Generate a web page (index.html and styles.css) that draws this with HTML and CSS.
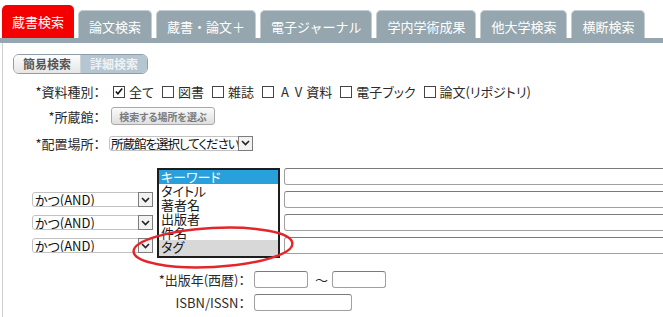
FILE: index.html
```html
<!DOCTYPE html>
<html lang="ja">

<head>
    <meta charset="UTF-8">
    <meta name="viewport" content="width=device-width, initial-scale=1.0">
    <title>蔵書検索</title>
    <link rel="stylesheet" href="styles.css">
</head>

<body>

    <!-- Tabs -->
    <div class="tabs">
        <div class="tab tab-active">蔵書検索</div>
        <div class="tab">論文検索</div>
        <div class="tab">蔵書・論文＋</div>
        <div class="tab">電子ジャーナル</div>
        <div class="tab">学内学術成果</div>
        <div class="tab">他大学検索</div>
        <div class="tab">横断検索</div>
    </div>
    <div class="tab-line"></div>

    <div class="panel">

        <!-- Simple / detail toggle -->
        <div class="mode">
            <span class="mode-btn">簡易検索</span>
            <span class="mode-btn mode-on">詳細検索</span>
        </div>

        <div class="row row-type">
            <div class="label">*資料種別：</div>
            <div class="checks">
                <span class="check"><span class="box"><svg width="11" height="11" viewBox="0 0 11 11"><path d="M2 5.5 L4.3 8 L9 2.2" fill="none" stroke="#111" stroke-width="1.7"/></svg></span>全て</span>
                <span class="check"><span class="box"></span>図書</span>
                <span class="check"><span class="box"></span>雑誌</span>
                <span class="check"><span class="box"></span><span class="av">A&nbsp;&nbsp;V</span>資料</span>
                <span class="check"><span class="box"></span>電子ブック</span>
                <span class="check"><span class="box"></span>論文(リポジトリ)</span>
            </div>
        </div>

        <div class="row row-lib">
            <div class="label">*所蔵館：</div>
            <button class="pick-btn">検索する場所を選ぶ</button>
        </div>

        <div class="row row-loc">
            <div class="label">*配置場所：</div>
            <div class="select select-loc">
                <span class="select-text">所蔵館を選択してください</span>
                <span class="select-arrow"><svg width="9" height="6" viewBox="0 0 9 6"><path d="M1 1 L4.5 4.5 L8 1" fill="none" stroke="#222" stroke-width="1.6"/></svg></span>
            </div>
        </div>

        <!-- Keyword rows -->
        <div class="search">
            <div class="srow">
                <div class="op-space"></div>
                <div class="select select-field"><span class="select-text">キーワード</span></div>
                <input type="text" class="text">
            </div>
            <div class="srow">
                <div class="select select-op">
                    <span class="select-text">かつ(AND)</span>
                    <span class="select-arrow"><svg width="9" height="6" viewBox="0 0 9 6"><path d="M1 1 L4.5 4.5 L8 1" fill="none" stroke="#222" stroke-width="1.6"/></svg></span>
                </div>
                <div class="select select-field"><span class="select-text">タイトル</span></div>
                <input type="text" class="text">
            </div>
            <div class="srow">
                <div class="select select-op">
                    <span class="select-text">かつ(AND)</span>
                    <span class="select-arrow"><svg width="9" height="6" viewBox="0 0 9 6"><path d="M1 1 L4.5 4.5 L8 1" fill="none" stroke="#222" stroke-width="1.6"/></svg></span>
                </div>
                <div class="select select-field"><span class="select-text">著者名</span></div>
                <input type="text" class="text">
            </div>
            <div class="srow">
                <div class="select select-op">
                    <span class="select-text">かつ(AND)</span>
                    <span class="select-arrow"><svg width="9" height="6" viewBox="0 0 9 6"><path d="M1 1 L4.5 4.5 L8 1" fill="none" stroke="#222" stroke-width="1.6"/></svg></span>
                </div>
                <div class="select select-field"><span class="select-text">出版者</span></div>
                <input type="text" class="text">
            </div>

            <!-- open dropdown of the first row -->
            <div class="listbox">
                <div class="opt opt-sel">キーワード</div>
                <div class="opt">タイトル</div>
                <div class="opt">著者名</div>
                <div class="opt">出版者</div>
                <div class="opt">件名</div>
                <div class="opt opt-hover">タグ</div>
            </div>

            <!-- red marker circle -->
            <svg class="marker" width="164" height="45" viewBox="0 0 164 45">
                <ellipse cx="82" cy="22.5" rx="79.5" ry="19.5" transform="rotate(-3 82 22.5)" fill="none" stroke="#e3262b" stroke-width="2.5"/>
            </svg>
        </div>

        <div class="row row-year">
            <div class="label label-wide">*出版年(西暦)：</div>
            <input type="text" class="text text-year">
            <span class="tilde">～</span>
            <input type="text" class="text text-year">
        </div>

        <div class="row row-isbn">
            <div class="label label-wide">ISBN/ISSN：</div>
            <input type="text" class="text text-isbn">
        </div>

    </div>

</body>

</html>
```

FILE: styles.css
```css
body {
    margin: 0;
    font-family: "Noto Sans CJK JP", "Noto Sans", sans-serif;
    font-size: 13px;
    color: #2b2b2b;
    background: #fff;
    overflow: hidden;
}

/*--------------Tabs-------------*/
.tabs {
    display: flex;
    align-items: flex-end;
    gap: 4px;
    height: 38px;
    padding-left: 2px;
}

.tab {
    box-sizing: border-box;
    height: 28px;
    padding: 3px 10px 0;
    line-height: 25px;
    background-color: #95a6ae;
    border: 1px solid #c4cdd2;
    border-bottom: none;
    border-radius: 5px 5px 0 0;
    color: #fff;
    white-space: nowrap;
}

.tab-active {
    height: 33px;
    padding: 0 10px;
    line-height: 33px;
    background-color: #f40000;
    border: none;
}

.tab-line {
    height: 5px;
    background-color: #95a6ae;
}

/*--------------Panel-------------*/
.panel {
    margin-left: 2px;
    border-left: 1px solid #cfcfcf;
    padding: 11px 0 0 10px;
    height: 263px;
    overflow: hidden;
    font-feature-settings: "palt";
}

/* toggle */
.mode {
    display: inline-flex;
    border: 1px solid #8d9ea8;
    border-radius: 6px;
    overflow: hidden;
    font-size: 12px;
    font-weight: bold;
}

.mode-btn {
    height: 18px;
    line-height: 18px;
    padding: 0 9px;
    color: #555;
    background: linear-gradient(#fdfdfd, #e6e6e6);
}

.mode-on {
    color: #eef2f5;
    background: #b6c6d1;
    border-left: 1px solid #c9d3da;
}

/* form rows */
.row {
    display: flex;
    align-items: center;
}

.label {
    width: 87px;
    flex: none;
    text-align: right;
    margin-right: 9px;
    white-space: nowrap;
}

.label-wide {
    width: 232px;
}

.row-type {
    margin-top: 8px;
    height: 19px;
}

.row-lib {
    height: 30px;
}

.row-loc {
    height: 24px;
}

.row-year {
    margin-top: 11px;
    height: 23px;
}

.row-isbn {
    height: 23px;
}

/* checkboxes */
.checks {
    display: flex;
    gap: 8px;
    margin-left: 4px;
}

.check {
    display: flex;
    align-items: center;
    gap: 4px;
    white-space: nowrap;
}

.av {
    margin-left: 3px;
}

.box {
    box-sizing: border-box;
    width: 12px;
    height: 12px;
    border: 1px solid #444;
    display: flex;
    align-items: center;
    justify-content: center;
    background: #fff;
}

/* library button */
.pick-btn {
    box-sizing: border-box;
    width: 104px;
    height: 18px;
    margin-left: 2px;
    padding: 0;
    font-family: inherit;
    font-size: 10px;
    font-weight: bold;
    color: #7a7a7a;
    background: linear-gradient(#fbfbfb, #dedede);
    border: 1px solid #a9a9a9;
    border-radius: 3px;
    font-feature-settings: "palt";
}

/* select boxes */
.select {
    box-sizing: border-box;
    display: flex;
    align-items: stretch;
    height: 15px;
    border: 1px solid #c2c2c2;
    border-radius: 3px;
    background: #fff;
    flex: none;
}

.select-text {
    flex: 1;
    overflow: hidden;
    white-space: nowrap;
    padding-left: 2px;
    line-height: 13px;
    color: #111;
}

.select-arrow {
    box-sizing: border-box;
    width: 15px;
    margin: -1px -1px -1px 0;
    border: 1px solid #7c7c7c;
    background: #f2f2f2;
    display: flex;
    align-items: center;
    justify-content: center;
}

.select-loc {
    width: 144px;
}

.select-loc .select-text {
    font-size: 12.5px;
    letter-spacing: -1px;
    padding-left: 1px;
}

.select-op {
    width: 121px;
    margin-right: 4px;
}

.select-field {
    width: 122px;
    margin-right: 5px;
}

.op-space {
    width: 121px;
    margin-right: 4px;
    flex: none;
}

/* keyword rows */
.search {
    position: relative;
    margin-top: 10px;
    padding-left: 19px;
}

.srow {
    display: flex;
    align-items: center;
    height: 23px;
}

.text {
    box-sizing: border-box;
    height: 17px;
    width: 420px;
    flex: none;
    margin: 0;
    border: 1px solid #a0a0a0;
    border-top-color: #7a7a7a;
    border-radius: 3px;
    background: #fff;
}

.text-year {
    width: 54px;
}

.text-isbn {
    width: 98px;
}

.tilde {
    margin: 0 4px 0 7px;
}

/* open dropdown list */
.listbox {
    position: absolute;
    left: 144px;
    top: 3px;
    box-sizing: border-box;
    width: 123px;
    height: 90px;
    border: 2px solid #1d1d1d;
    background: #fff;
    overflow: hidden;
}

.opt {
    height: 14px;
    line-height: 14px;
    padding-left: 2px;
    color: #1a1a1a;
    white-space: nowrap;
}

.opt-sel {
    background: #27a0db;
    color: #fff;
}

.opt-hover {
    height: 16px;
    background: #d8d8d8;
}

.marker {
    position: absolute;
    left: 118px;
    top: 60px;
}
```
